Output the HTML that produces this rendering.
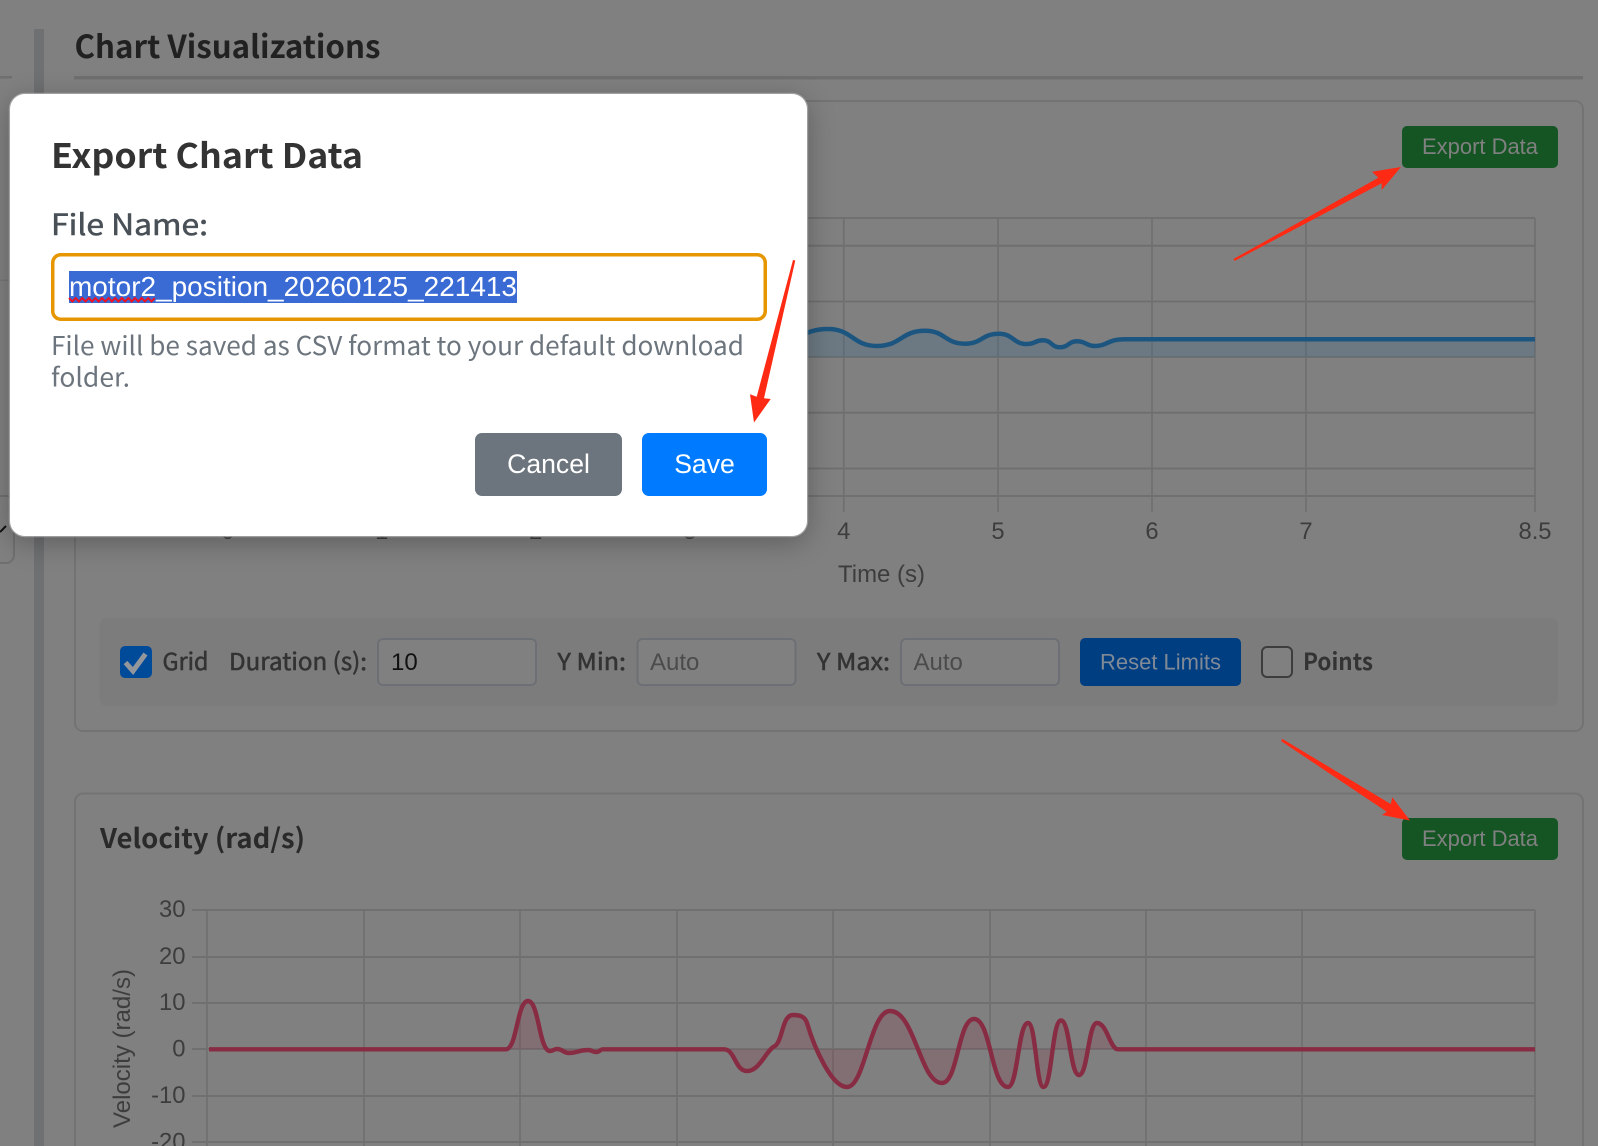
<!DOCTYPE html>
<html lang="en">
<head>
<meta charset="utf-8">
<title>Export Chart Data</title>
<style>
html,body{margin:0;padding:0;width:1598px;height:1146px;overflow:hidden;background:#808080}
svg{position:absolute;left:0;top:0;display:block}
.modal{position:absolute;left:10.3px;top:93.6px;width:797px;height:442.6px;background:#fff;border-radius:15px;box-shadow:0 0 0 1.2px rgba(170,170,170,.8),0 6px 28px rgba(0,0,0,.28)}
.u{font-family:"Noto Sans CJK SC","Liberation Sans",sans-serif}
.l{font-family:"Liberation Sans",sans-serif}
</style>
</head>
<body>
<svg width="1598" height="1146" viewBox="0 0 1598 1146" style="height:1146px;overflow:hidden">
  <rect width="1598" height="1146" fill="#808080"/>
  <!-- left remnants -->
  <rect x="0" y="76" width="12" height="2.5" fill="#707070"/>
  <rect x="0" y="279.5" width="12" height="1.5" fill="#767676"/>
  <path d="M0,496H6a8,8 0 0 1 8,8V555a8,8 0 0 1 -8,8H0" fill="none" stroke="#707070" stroke-width="2"/>
  <path d="M0,532 L6,526" stroke="#111" stroke-width="2" fill="none"/>
  <!-- sidebar stripe -->
  <rect x="34" y="29" width="10" height="1117" fill="#6e7071"/>
  <!-- heading -->
  <text class="u" x="74.5" y="58" font-size="31.5" font-weight="700" fill="#212121" textLength="306" lengthAdjust="spacingAndGlyphs">Chart Visualizations</text>
  <rect x="74" y="76" width="1509" height="3.5" fill="#6f6f6f"/>

  <!-- card 1 -->
  <rect x="75" y="101" width="1508" height="630" rx="8" fill="none" stroke="#737373" stroke-width="2"/>
  <rect x="1402" y="126" width="156" height="42" rx="5" fill="#145523"/>
  <text class="l" x="1422" y="154" font-size="22" fill="#808080" textLength="116" lengthAdjust="spacingAndGlyphs">Export Data</text>

  <!-- chart 1 grid -->
  <g stroke="#6e6e6e" stroke-width="1.8" fill="none">
    <path d="M60,218H1535M60,245.7H1535M60,301.5H1535M60,357H1535M60,412.7H1535M60,468.5H1535M60,496H1535"/>
  </g>
  <g stroke="#707070" stroke-width="1.8" fill="none">
    <path d="M227.8,218V512M381.8,218V512M535.8,218V512M689.8,218V512M843.8,218V512M998,218V512M1152,218V512M1306,218V512M1535,218V512"/>
  </g>
  <path d="M770,345C799,345 799,329 828,329C852.5,329 852.5,346 877,346C901,346 901,330.7 925,330.7C945,330.7 945,343.7 965,343.7C982,343.7 982,333.7 999,333.7C1013,333.7 1013,344 1027,344C1035,344 1035,340.3 1043,340.3C1051.5,340.3 1051.5,347.3 1060,347.3C1068.5,347.3 1068.5,341.3 1077,341.3C1086,341.3 1086,346 1095,346C1107,346 1107,339.3 1125,339.3L1535,339.3L1535,357L770,357Z" fill="#36688a" fill-opacity=".27"/>
  <path d="M770,345C799,345 799,329 828,329C852.5,329 852.5,346 877,346C901,346 901,330.7 925,330.7C945,330.7 945,343.7 965,343.7C982,343.7 982,333.7 999,333.7C1013,333.7 1013,344 1027,344C1035,344 1035,340.3 1043,340.3C1051.5,340.3 1051.5,347.3 1060,347.3C1068.5,347.3 1068.5,341.3 1077,341.3C1086,341.3 1086,346 1095,346C1107,346 1107,339.3 1125,339.3L1535,339.3" fill="none" stroke="#1c5680" stroke-width="4.5"/>
  <g font-size="23.8" fill="#3d3d3d" text-anchor="middle" font-family="Liberation Sans, sans-serif">
    <text x="227.8" y="539">0</text><text x="381.8" y="539">1</text><text x="535.8" y="539">2</text><text x="689.8" y="539">3</text>
    <text x="843.8" y="539">4</text><text x="998" y="539">5</text><text x="1152" y="539">6</text><text x="1306" y="539">7</text><text x="1535" y="539">8.5</text>
  </g>
  <text class="l" x="838" y="582" font-size="23.6" fill="#3d3d3d" textLength="87" lengthAdjust="spacingAndGlyphs">Time (s)</text>

  <!-- controls -->
  <rect x="99.5" y="618" width="1458.5" height="88" rx="7" fill="#7c7c7c"/>
  <rect x="120" y="646" width="32" height="32" rx="5" fill="#004a9a"/>
  <path d="M125.5,662.5 L133,671 L145.5,654" fill="none" stroke="#93979c" stroke-width="5"/>
  <g class="u" font-size="23.5" fill="#333" stroke="#333" stroke-width=".55">
    <text x="162.5" y="670" textLength="46" lengthAdjust="spacingAndGlyphs">Grid</text>
    <text x="229" y="670" textLength="138" lengthAdjust="spacingAndGlyphs">Duration (s):</text>
    <text x="557.5" y="670" textLength="68.5" lengthAdjust="spacingAndGlyphs">Y Min:</text>
    <text x="817" y="670" textLength="73" lengthAdjust="spacingAndGlyphs">Y Max:</text>
  </g>
  <rect x="378" y="639" width="158" height="46" rx="5" fill="#808080" stroke="#6c7075" stroke-width="2"/>
  <text class="l" x="391" y="670" font-size="24" fill="#111">10</text>
  <rect x="637.5" y="639" width="158" height="46" rx="5" fill="#808080" stroke="#6c7075" stroke-width="2"/>
  <text class="l" x="650" y="670" font-size="24" fill="#4b4b4b">Auto</text>
  <rect x="901" y="639" width="158" height="46" rx="5" fill="#808080" stroke="#6c7075" stroke-width="2"/>
  <text class="l" x="913.5" y="670" font-size="24" fill="#4b4b4b">Auto</text>
  <rect x="1080" y="638" width="161" height="48" rx="5" fill="#003e82"/>
  <text class="l" x="1100" y="669.5" font-size="22" fill="#808a96" textLength="121" lengthAdjust="spacingAndGlyphs">Reset Limits</text>
  <rect x="1262" y="647" width="30" height="30" rx="5" fill="#808080" stroke="#3d3d3d" stroke-width="2"/>
  <text class="u" x="1303" y="670" font-size="23.5" font-weight="700" fill="#333" textLength="70" lengthAdjust="spacingAndGlyphs">Points</text>

  <!-- card 2 -->
  <path d="M75,1146V801.5a8,8 0 0 1 8,-8H1575a8,8 0 0 1 8,8V1146" fill="none" stroke="#737373" stroke-width="2"/>
  <text class="u" x="100" y="848" font-size="27" font-weight="700" fill="#2a2a2a" textLength="205" lengthAdjust="spacingAndGlyphs">Velocity (rad/s)</text>
  <rect x="1402" y="818" width="156" height="42" rx="5" fill="#145523"/>
  <text class="l" x="1422" y="846" font-size="22" fill="#808080" textLength="116" lengthAdjust="spacingAndGlyphs">Export Data</text>

  <!-- chart 2 -->
  <g stroke="#6e6e6e" stroke-width="1.8" fill="none">
    <path d="M192,910H1535M192,957H1535M192,1003H1535M192,1049H1535M192,1096H1535M192,1142H1535"/>
  </g>
  <g stroke="#707070" stroke-width="1.8" fill="none">
    <path d="M207,910V1146M364,910V1146M520,910V1146M677,910V1146M833,910V1146M990,910V1146M1146,910V1146M1302,910V1146M1535,910V1146"/>
  </g>
  <path d="M506,1049C517,1049 517,1001 528,1001C539,1001 539,1051 550,1051C553.5,1051 553.5,1049 557,1049C563,1049 563,1053 569,1053C578,1053 578,1050 588,1050C592,1050 592,1052 596,1052C600,1052 600,1049.3 603,1049.3L724,1049.3C735,1049.3 735,1071 747,1071C760,1071 766,1050 775,1046C783,1040 782,1015 793,1015C801,1015 805,1017 807,1023C815,1050 832,1087 847,1087C865,1087 870,1011 890,1011C915,1011 920,1083 942,1083C958,1083 958,1019 974,1019C991,1019 991,1087 1008,1087C1018,1087 1018,1023 1028,1023C1036,1023 1036,1087 1043.5,1087C1052,1087 1052,1020.5 1061,1020.5C1070,1020.5 1070,1075 1079,1075C1088,1075 1088,1023 1097,1023C1107,1023 1110,1049.3 1118,1049.3Z" fill="#8c2e47" fill-opacity=".2"/>
  <path d="M209,1049.3L506,1049.3C517,1049 517,1001 528,1001C539,1001 539,1051 550,1051C553.5,1051 553.5,1049 557,1049C563,1049 563,1053 569,1053C578,1053 578,1050 588,1050C592,1050 592,1052 596,1052C600,1052 600,1049.3 603,1049.3L724,1049.3C735,1049.3 735,1071 747,1071C760,1071 766,1050 775,1046C783,1040 782,1015 793,1015C801,1015 805,1017 807,1023C815,1050 832,1087 847,1087C865,1087 870,1011 890,1011C915,1011 920,1083 942,1083C958,1083 958,1019 974,1019C991,1019 991,1087 1008,1087C1018,1087 1018,1023 1028,1023C1036,1023 1036,1087 1043.5,1087C1052,1087 1052,1020.5 1061,1020.5C1070,1020.5 1070,1075 1079,1075C1088,1075 1088,1023 1097,1023C1107,1023 1110,1049.3 1118,1049.3L1535,1049.3" fill="none" stroke="#882c44" stroke-width="4.4" stroke-linejoin="round"/>
  <g font-family="Liberation Sans, sans-serif" font-size="23.8" fill="#3d3d3d" text-anchor="end">
    <text x="185.5" y="917">30</text><text x="185.5" y="964">20</text><text x="185.5" y="1010">10</text><text x="185.5" y="1056.5">0</text><text x="185.5" y="1103">-10</text><text x="185.5" y="1149.5">-20</text>
  </g>
  <text font-family="Liberation Sans, sans-serif" font-size="23.8" fill="#3d3d3d" transform="translate(130,1128) rotate(-90)" textLength="159" lengthAdjust="spacingAndGlyphs">Velocity (rad/s)</text>
</svg>

<div class="modal"></div>

<svg width="1598" height="1146" viewBox="0 0 1598 1146" style="height:1146px;overflow:hidden">
  <text class="u" x="51" y="168" font-size="34" font-weight="700" fill="#333" textLength="312" lengthAdjust="spacingAndGlyphs">Export Chart Data</text>
  <text class="u" x="51" y="235" font-size="29" fill="#495057" stroke="#495057" stroke-width=".55" textLength="157" lengthAdjust="spacingAndGlyphs">File Name:</text>
  <rect x="52.75" y="254.75" width="712.5" height="64.5" rx="8" fill="#fff" stroke="#e59600" stroke-width="3.5"/>
  <rect x="69" y="271" width="448" height="32" fill="#3a6bd5"/>
  <text class="l" x="69" y="296" font-size="28" fill="#fff" textLength="448" lengthAdjust="spacingAndGlyphs">motor2_position_20260125_221413</text>
  <path d="M69,298l3.3,3.5l3.3,-3.5l3.3,3.5l3.3,-3.5l3.3,3.5l3.3,-3.5l3.3,3.5l3.3,-3.5l3.3,3.5l3.3,-3.5l3.3,3.5l3.3,-3.5l3.3,3.5l3.3,-3.5l3.3,3.5l3.3,-3.5l3.3,3.5l3.3,-3.5l3.3,3.5l3.3,-3.5l3.3,3.5l3.3,-3.5l3.3,3.5l3.3,-3.5l3.3,3.5l3.3,-3.5" fill="none" stroke="#f0101f" stroke-width="1.9"/>
  <text class="u" x="51" y="355" font-size="26" fill="#6c757d" textLength="693" lengthAdjust="spacingAndGlyphs">File will be saved as CSV format to your default download</text>
  <text class="u" x="51" y="386.5" font-size="26" fill="#6c757d" textLength="79" lengthAdjust="spacingAndGlyphs">folder.</text>
  <rect x="475" y="433" width="147" height="63" rx="7" fill="#6c757d"/>
  <text font-family="Liberation Sans, sans-serif" x="548.5" y="473" font-size="26.6" fill="#fff" text-anchor="middle">Cancel</text>
  <rect x="642" y="433" width="125" height="63" rx="7" fill="#007bff"/>
  <text font-family="Liberation Sans, sans-serif" x="704.5" y="473" font-size="26.6" fill="#fff" text-anchor="middle">Save</text>

  <!-- arrows -->
  <g fill="#ff2a14">
    <polygon points="1233.5,259 1378.3,177.7 1372,171.7 1401,167 1381.7,190 1381.7,183.3 1234.5,261"/>
    <polygon points="793,260 795.3,260.5 764,398.3 770.7,399 754,422.5 750,394.3 756.7,396.7"/>
    <polygon points="1282.5,739 1390.7,804 1392.3,797.3 1410,820.5 1382,815 1386.7,811.7 1281,741"/>
  </g>
</svg>
</body>
</html>
